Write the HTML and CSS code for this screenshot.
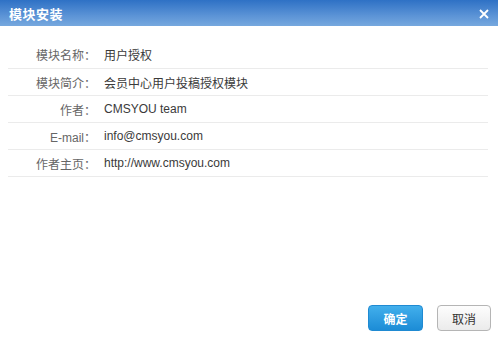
FILE: index.html
```html
<!DOCTYPE html>
<html lang="zh-CN">
<head>
    <meta charset="UTF-8">
    <title>模块安装</title>
    <link rel="stylesheet" href="styles.css">
</head>
<body>
    <div class="dialog">
        <div class="dialog-title">
            <span class="title-text">模块安装</span>
            <a class="close-btn" href="#">
                <svg width="10" height="10" viewBox="0 0 10 10">
                    <path d="M1 1 L9 9 M9 1 L1 9" stroke="#fff" stroke-width="1.8" fill="none"/>
                </svg>
            </a>
        </div>

        <div class="dialog-body">
            <table class="info-table">
                <tr>
                    <th>模块名称：</th>
                    <td>用户授权</td>
                </tr>
                <tr>
                    <th>模块简介：</th>
                    <td>会员中心用户投稿授权模块</td>
                </tr>
                <tr>
                    <th>作者：</th>
                    <td>CMSYOU team</td>
                </tr>
                <tr>
                    <th>E-mail：</th>
                    <td>info@cmsyou.com</td>
                </tr>
                <tr>
                    <th>作者主页：</th>
                    <td>http://www.cmsyou.com</td>
                </tr>
            </table>
        </div>

        <div class="dialog-footer">
            <button class="btn btn-primary">确定</button>
            <button class="btn btn-default">取消</button>
        </div>
    </div>
</body>
</html>
```

FILE: styles.css
```css
* {
    margin: 0;
    padding: 0;
    box-sizing: border-box;
}

body {
    font-family: "Liberation Sans", "Noto Sans CJK SC", sans-serif;
    font-size: 12px;
    background: #fff;
}

.dialog {
    width: 498px;
    height: 337px;
    display: flex;
    flex-direction: column;
    background: #fff;
}

.dialog-title {
    height: 26px;
    display: flex;
    align-items: center;
    justify-content: space-between;
    padding: 0 9px 0 9px;
    background: linear-gradient(to bottom, #2e71c5, #5b93d6 60%, #76a8de);
}

.title-text {
    color: #fff;
    font-weight: bold;
    font-size: 13px;
    letter-spacing: 0.5px;
}

.close-btn {
    display: flex;
    align-items: center;
    margin-top: 1px;
}

.dialog-body {
    flex: 1;
    padding: 15px 10px 0 8px;
}

.info-table {
    width: 100%;
    border-collapse: collapse;
}

.info-table th,
.info-table td {
    height: 27px;
    border-bottom: 1px solid #ebebeb;
    font-weight: normal;
    padding-top: 1px;
}

.info-table th {
    width: 88px;
    text-align: right;
    color: #666;
}

.info-table td {
    padding-left: 8px;
    color: #3a3a3a;
}

.dialog-footer {
    display: flex;
    justify-content: flex-end;
    gap: 14px;
    padding: 0 7px 6px 0;
}

.btn {
    height: 26px;
    width: 55px;
    border-radius: 4px;
    font-family: "Liberation Sans", "Noto Sans CJK SC", sans-serif;
    font-size: 12px;
    cursor: pointer;
}

.btn-primary {
    color: #fff;
    font-weight: bold;
    border: 1px solid #1f8ad2;
    background: linear-gradient(to bottom, #42afec, #1c8cd6);
}

.btn-default {
    width: 54px;
    color: #333;
    border: 1px solid #b5b5b5;
    background: linear-gradient(to bottom, #fdfdfd, #ebebeb);
}
```
